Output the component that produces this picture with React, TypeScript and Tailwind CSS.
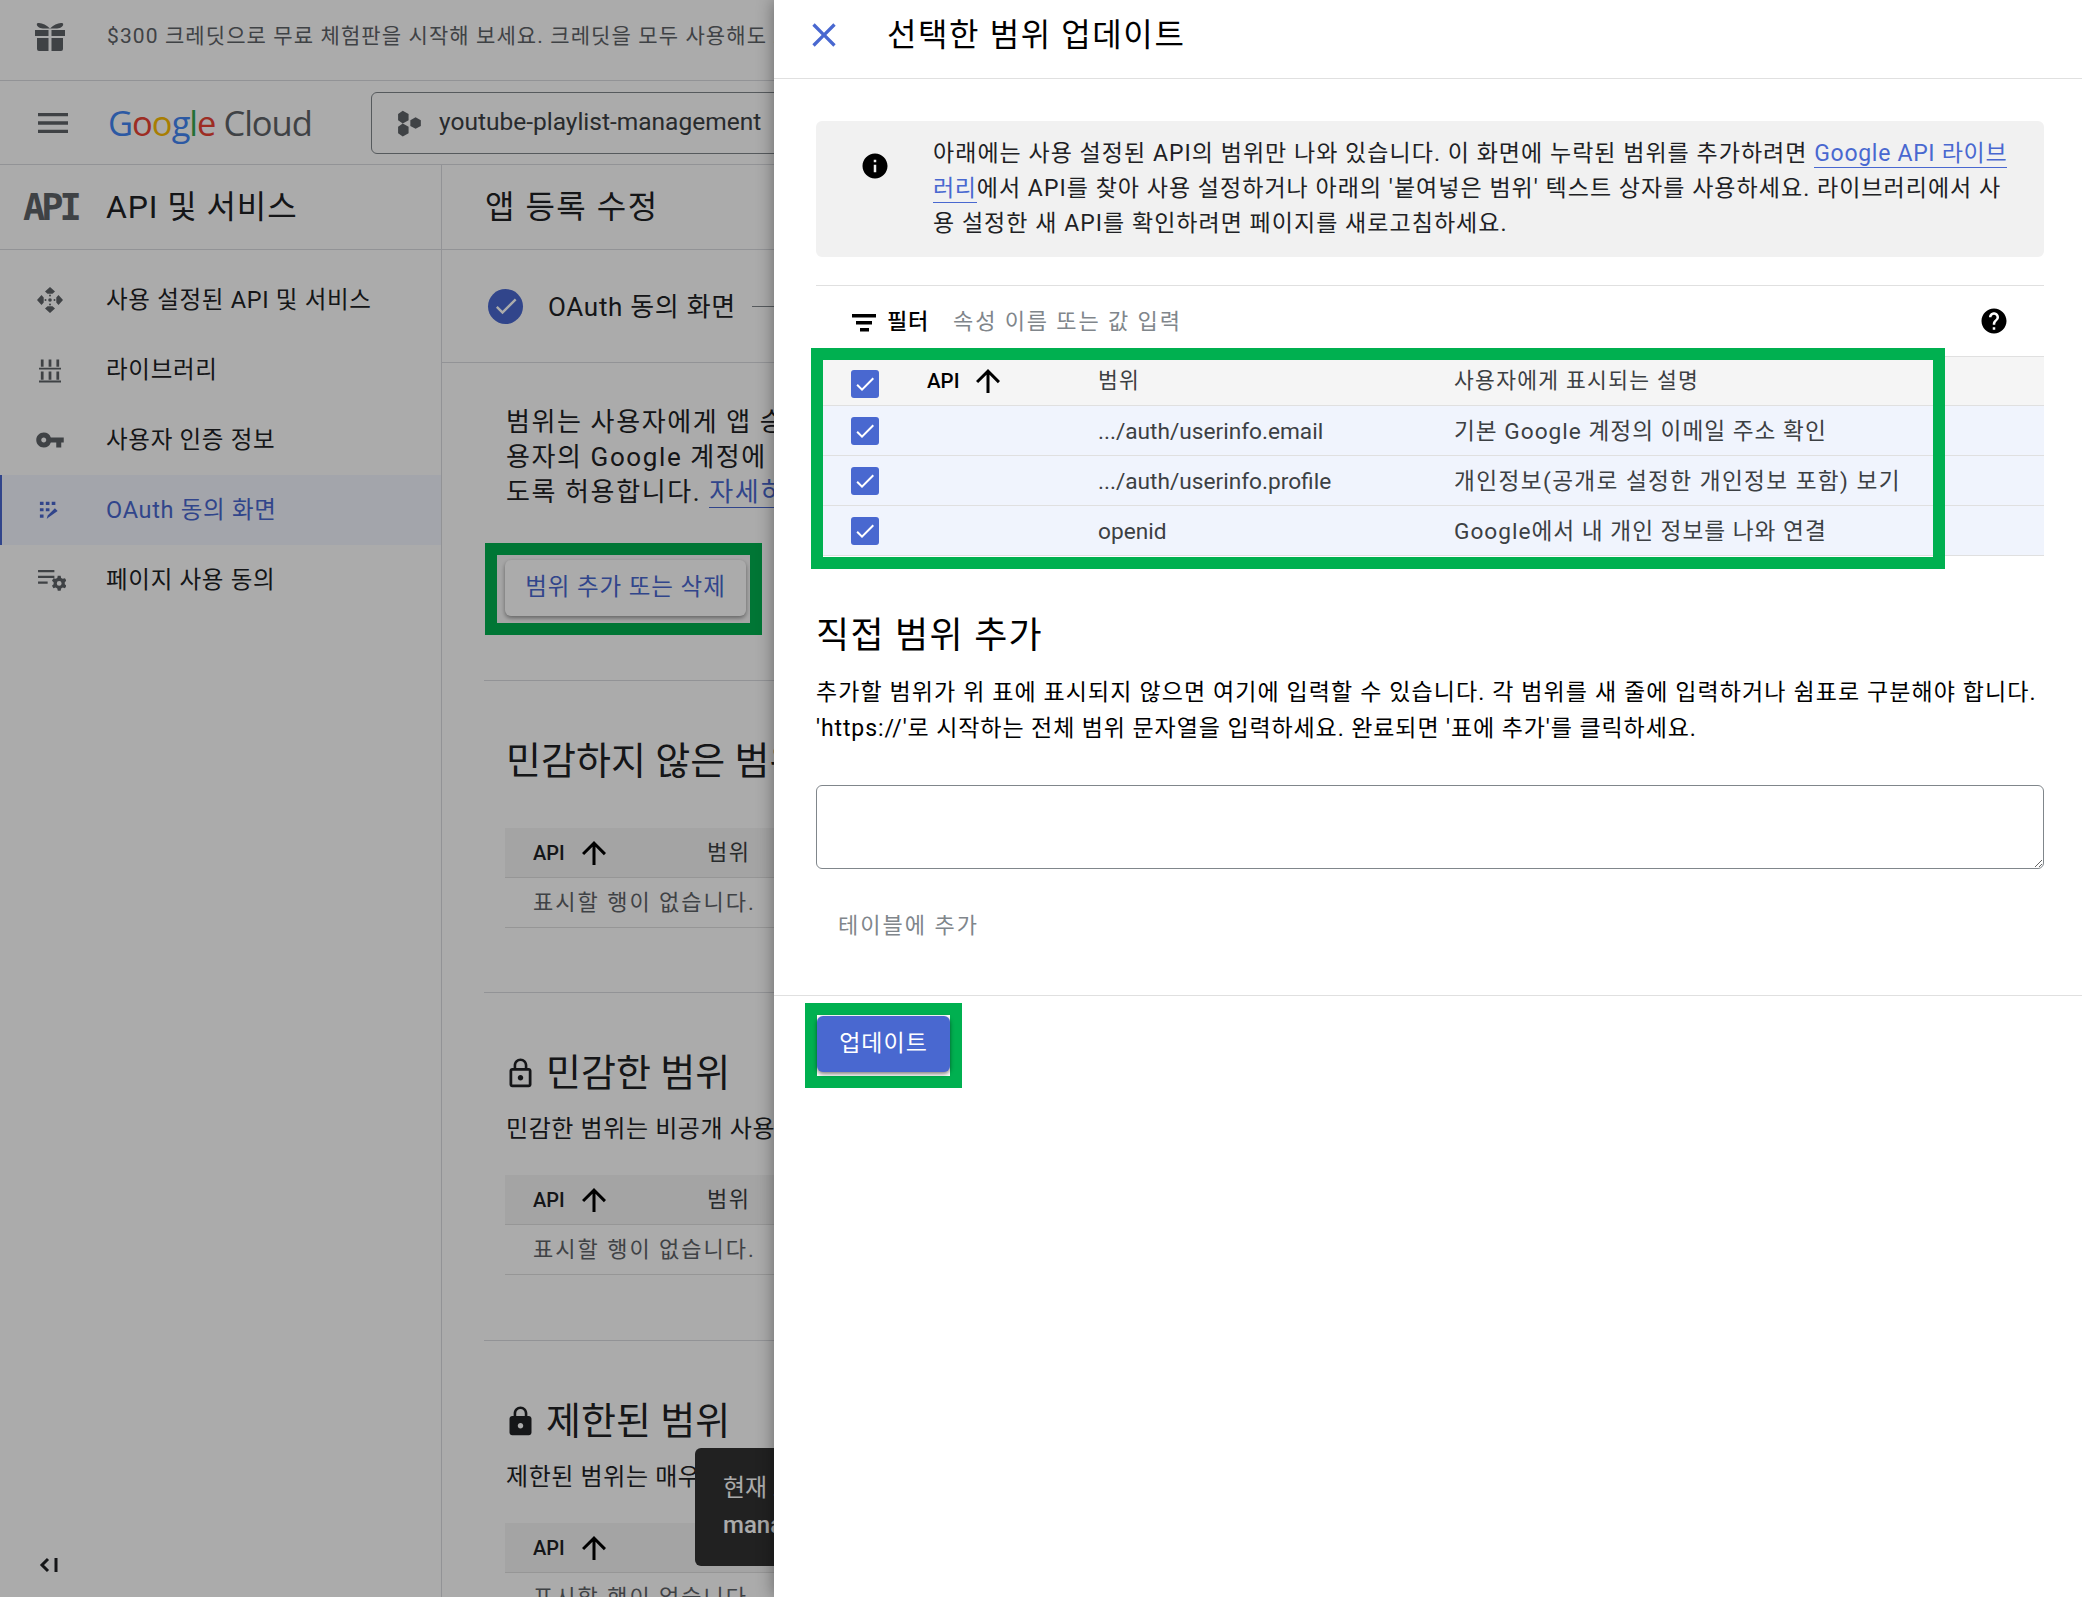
import React from 'react'
import {
  MdArrowUpward,
  MdCheck,
  MdClose,
  MdHelp,
  MdInfo,
  MdLock,
  MdLockOutline,
  MdMenu,
  MdVpnKey,
} from 'react-icons/md'

const GiftIcon = () => (
  <svg viewBox="0 0 32 32" className="w-8 h-8 text-[#5f6368]" fill="currentColor">
    <path d="M1 9h13.500v6H1zM17.500 9H31v6H17.500zM3 17h11.500v13H5a2 2 0 0 1-2-2zM17.500 17H29v11a2 2 0 0 1-2 2h-9.500z" />
    <path d="M3 2.500c3-1.500 9 1 13 5 4-4 10-6.500 13-5 1 2-2 5-6 5H9c-4 0-7-3-6-5z" />
  </svg>
)

const ProjectIcon = () => (
  <svg viewBox="0 0 24 24" className="w-7 h-7 text-[#5f6368]" fill="currentColor">
    <path d="M7.500 1.500l5 2.800v5.400l-5 2.800-4-2.800V4.300zM7.500 12.500l5 2.800v5.400l-5 2.800-4-2.800v-5.400zM18.500 7l4.500 2.600v5L18.500 17l-4.500-2.400v-5z" />
  </svg>
)

const ApisIcon = () => (
  <svg viewBox="0 0 28 28" className="w-7 h-7 ml-px text-[#5f6368]" fill="currentColor">
    <path d="M14 1l5 4.500-2.500 2.200h-5L9 5.500zM14 27l-5-4.500 2.500-2.200h5l2.500 2.200zM1 14l4.500-5 2.200 2.500v5L5.500 19zM27 14l-4.500 5-2.200-2.500v-5L22.500 9z" />
    <circle cx="14" cy="14" r="1.800" />
    <circle cx="14" cy="9.500" r="1" />
    <circle cx="14" cy="18.500" r="1" />
    <circle cx="9.500" cy="14" r="1" />
    <circle cx="18.500" cy="14" r="1" />
  </svg>
)

const LibraryIcon = () => (
  <svg viewBox="0 0 24 26" className="w-[22px] h-[25px] ml-1 text-[#5f6368]" fill="currentColor">
    <path d="M2 1h3v8H2zM10.500 1h3v8h-3zM19 1h3v8h-3zM0 10h24v2H0zM2 14h3v9H2zM10.500 14h3v9h-3zM19 14h3v9h-3zM0 24h24v2H0z" />
  </svg>
)

const OAuthIcon = () => (
  <svg viewBox="0 0 22 22" className="w-5 h-5 ml-1 text-[#4968d0]" fill="currentColor">
    <path d="M1 2h4v3.500H1zM7.500 2h4v3.500h-4zM14 2h4v3.500h-4zM1 9h4v3.500H1zM7.500 9h4v3.500h-4zM1 16h4v3.500H1z" />
    <path d="M10 19.500l-1.500 1.500 1-4 8-8 3 3z" />
  </svg>
)

const PageUsageIcon = () => (
  <svg viewBox="0 0 30 26" className="w-[29px] h-[25px] ml-[2px] text-[#5f6368]" fill="currentColor">
    <path d="M1 2h17v2.500H1zM1 8h17v2.500H1zM1 14h10v2.500H1z" />
    <path d="M21.500 8h3l.5 2.300 1.700 1 2.300-.7 1.500 2.600-1.700 1.600v2l1.700 1.600-1.500 2.600-2.300-.7-1.700 1-.5 2.300h-3l-.5-2.300-1.700-1-2.300.7-1.500-2.600 1.700-1.600v-2l-1.700-1.600 1.500-2.600 2.300.7 1.700-1zM23 13.500a2.500 2.500 0 1 0 0 5 2.500 2.500 0 0 0 0-5z" />
  </svg>
)

const FilterIcon = () => (
  <svg viewBox="0 0 24 18" className="w-6 h-[18px] mt-[3px] shrink-0 text-black" fill="currentColor">
    <path d="M0 0h24v3.600H0zM4 7h16v3.600H4zM8 14h9v3.600H8z" />
  </svg>
)

const navItems = [
  { label: '사용 설정된 API 및 서비스', icon: <ApisIcon /> },
  { label: '라이브러리', icon: <LibraryIcon /> },
  { label: '사용자 인증 정보', icon: <MdVpnKey className="w-[30px] h-[30px] text-[#5f6368]" /> },
  { label: 'OAuth 동의 화면', icon: <OAuthIcon />, active: true },
  { label: '페이지 사용 동의', icon: <PageUsageIcon /> },
]

const scopeRows = [
  { scope: '.../auth/userinfo.email', desc: '기본 Google 계정의 이메일 주소 확인', spacing: 'tracking-[1px]' },
  { scope: '.../auth/userinfo.profile', desc: '개인정보(공개로 설정한 개인정보 포함) 보기', spacing: 'tracking-[1.4px]' },
  { scope: 'openid', desc: 'Google에서 내 개인 정보를 나와 연결', spacing: 'tracking-[1px]' },
]

const Checkbox = () => (
  <div className="w-7 h-7 rounded-[3px] bg-[#4968d0] flex items-center justify-center">
    <MdCheck className="w-6 h-6 text-white" />
  </div>
)

const EmptyTable = () => (
  <div className="w-[300px] -ml-px">
    <div className="h-[50px] bg-[#f5f5f5] border-b border-[#e0e0e0] flex items-center pl-7">
      <span className="font-medium w-[34px] text-[20px] text-[#202124]">API</span>
      <MdArrowUpward className="w-9 h-9 text-black ml-[9px] shrink-0" />
      <span className="ml-[95px] text-[22px] tracking-[1.5px] text-[#3c4043] whitespace-nowrap">범위</span>
    </div>
    <div className="h-[50px] border-b border-[#e0e0e0] flex items-center pl-7 text-[22px] tracking-[2px] text-[#5f6368] whitespace-nowrap">
      표시할 행이 없습니다.
    </div>
  </div>
)

const App = () => {
  return (
    <div className="flex w-[2082px] h-[1597px] overflow-hidden bg-white text-[#202124] font-[Roboto,'Noto_Sans_CJK_KR',sans-serif]">
      {/* dimmed page behind the side panel */}
      <div className="relative w-[774px] h-full shrink-0 overflow-hidden">
        <div className="w-[1100px]">
          <div className="h-[81px] border-b border-[#dadce0] flex items-center pl-[34px] pb-[6px]">
            <GiftIcon />
            <span className="ml-[41px] text-[#5f6368] text-[21px] tracking-[1.1px] whitespace-nowrap">
              $300 크레딧으로 무료 체험판을 시작해 보세요. 크레딧을 모두 사용해도 요금이 청구되지 않습니다.
            </span>
          </div>
          <div className="h-[84px] border-b border-[#dadce0] flex items-center pl-[34px]">
            <MdMenu className="w-10 h-10 text-[#5f6368] -ml-px" />
            <div className="ml-[35px] w-[224px] text-[34.5px] tracking-[-1px] whitespace-nowrap font-['Open_Sans',sans-serif]">
              <span className="text-[#4285f4]">G</span>
              <span className="text-[#ea4335]">o</span>
              <span className="text-[#fbbc04]">o</span>
              <span className="text-[#4285f4]">g</span>
              <span className="text-[#34a853]">l</span>
              <span className="text-[#ea4335]">e</span>
              <span className="text-[#5f6368]"> Cloud</span>
            </div>
            <div className="ml-[39px] w-[600px] h-[62px] rounded-[6px] border border-[#80868b] flex items-center pl-[22px]">
              <ProjectIcon />
              <span className="ml-[17px] text-[24.5px] text-[#3c4043]">youtube-playlist-management</span>
            </div>
          </div>
        </div>

        <div className="flex h-[1432px]">
          <aside className="relative w-[442px] shrink-0 border-r border-[#dadce0]">
            <div className="h-[85px] border-b border-[#dadce0] flex items-center pl-[23px]">
              <span className="w-[83px] text-[37px] font-bold leading-none text-[#5f6368] font-['DejaVu_Sans_Mono',monospace] tracking-[-4px]">API</span>
              <span className="text-[32px] tracking-[0.9px] text-[#202124] whitespace-nowrap">API 및 서비스</span>
            </div>
            <nav className="pt-[15px]">
              {navItems.map((item) => (
                <div
                  key={item.label}
                  className={
                    item.active
                      ? 'h-[70px] flex items-center border-l-2 border-[#4968d0] bg-[#f4f6ff] text-[#4968d0]'
                      : 'h-[70px] flex items-center border-l-2 border-transparent text-[#202124]'
                  }
                >
                  <div className="w-[100px] pl-[33px] flex items-center">{item.icon}</div>
                  <span className="ml-1 pt-px text-[23.5px] tracking-[0.7px] whitespace-nowrap">{item.label}</span>
                </div>
              ))}
            </nav>
            <svg viewBox="0 0 20 16" className="absolute left-[39px] bottom-[24px] w-[20px] h-[16px] text-[#202124]" fill="none" stroke="currentColor" strokeWidth="3">
              <path d="M9 2L3 8l6 6M17 1v14" />
            </svg>
          </aside>

          <main className="relative flex-1">
            <div className="h-[85px] border-b border-[#dadce0] flex items-center pl-[43px]">
              <span className="text-[32px] tracking-[1.5px] whitespace-nowrap">앱 등록 수정</span>
            </div>
            <div className="h-[113px] border-b border-[#dadce0] flex items-center pl-[46px]">
              <div className="w-[35px] h-[35px] rounded-full bg-[#4968d0] flex items-center justify-center">
                <MdCheck className="w-7 h-7 text-white" />
              </div>
              <span className="ml-[25px] pt-[2px] text-[26px] tracking-[0.7px] whitespace-nowrap">OAuth 동의 화면</span>
              <div className="ml-4 w-10 h-px bg-[#80868b]" />
            </div>

            <div className="pl-[64px] pt-[42px] w-[800px]">
              <p className="text-[26px] tracking-[1.6px] leading-[35px] whitespace-nowrap">
                범위는 사용자에게 앱 승인을 요청할 때 표시되며 앱에서 사<br />
                용자의 Google 계정에 있는 특정 유형의 비공개 데이터에 액세스할 수 있<br />
                도록 허용합니다. <span className="text-[#4968d0] border-b border-[#4968d0]">자세히 알아보기</span>
              </p>
            </div>

            <div className="ml-[43px] mt-[33px] w-[277px] h-[92px] bg-[#00b050] p-3">
              <div className="w-full h-full bg-[#f7f7f7] pl-2 pt-[5px]">
                <div className="w-[241px] h-[56px] rounded-[6px] bg-white shadow-[0_2px_4px_rgba(0,0,0,0.4)] flex items-center justify-center text-[#4968d0] text-[23.5px] tracking-[0.9px] whitespace-nowrap">
                  범위 추가 또는 삭제
                </div>
              </div>
            </div>

            <div className="ml-[42px] mt-[45px] border-t border-[#dadce0] w-[500px] pl-[22px] pt-[50px] h-[312px]">
              <h2 className="text-[38px] leading-[60px] whitespace-nowrap">민감하지 않은 범위</h2>
              <div className="mt-[37px]"><EmptyTable /></div>
            </div>

            <div className="ml-[42px] border-t border-[#dadce0] w-[500px] pl-[22px] pt-[50px] h-[348px]">
              <h2 className="text-[38px] leading-[60px] flex items-center whitespace-nowrap">
                <MdLockOutline className="w-[33px] h-[33px] -ml-[2px] mr-[9px] text-[#202124]" />
                민감한 범위
              </h2>
              <p className="text-[24px] tracking-[0.6px] leading-[40px] mt-[6px] whitespace-nowrap">민감한 범위는 비공개 사용자 데이터를 요청합니다.</p>
              <div className="mt-[26px]"><EmptyTable /></div>
            </div>

            <div className="ml-[42px] border-t border-[#dadce0] w-[500px] pl-[22px] pt-[50px]">
              <h2 className="text-[38px] leading-[60px] flex items-center whitespace-nowrap">
                <MdLock className="w-[33px] h-[33px] -ml-[2px] mr-[9px] text-[#202124]" />
                제한된 범위
              </h2>
              <p className="text-[24px] tracking-[0.6px] leading-[40px] mt-[6px] whitespace-nowrap">제한된 범위는 매우 민감한 사용자 데이터를 요청합니다.</p>
              <div className="mt-[26px]"><EmptyTable /></div>
            </div>
          </main>
        </div>

        {/* snackbar */}
        <div className="absolute left-[695px] top-[1448px] w-[300px] h-[118px] rounded-[6px] bg-[#323232] text-white text-[24px] leading-[37px] pl-7 pt-[22px] whitespace-nowrap">
          <div>현재 프로젝트</div>
          <div className="font-medium">management</div>
        </div>

        <div className="absolute inset-0 bg-black/[0.33]" />
      </div>

      {/* side panel */}
      <div className="relative flex-1 h-full bg-white shadow-[0_0_16px_rgba(0,0,0,0.4)]">
        <div className="h-[79px] border-b border-[#e0e0e0] flex items-center pl-[30px] pb-2">
          <MdClose className="w-[40px] h-[40px] text-[#4968d0] shrink-0" />
          <h1 className="ml-[43px] text-[32px] tracking-[1.6px] text-black whitespace-nowrap">선택한 범위 업데이트</h1>
        </div>

        <div className="pl-[42px] pr-[38px] pt-[42px]">
          <div className="h-[136px] rounded-[6px] bg-[#f1f1f1] flex pl-[44px]">
            <MdInfo className="w-[30px] h-[30px] text-black mt-[30px] shrink-0" />
            <p className="ml-[43px] pt-[15px] text-[23px] tracking-[1.03px] leading-[35px] text-[#202124] whitespace-nowrap">
              아래에는 사용 설정된 API의 범위만 나와 있습니다. 이 화면에 누락된 범위를 추가하려면{' '}
              <span className="text-[#4968d0] border-b border-[#4968d0] tracking-[0.7px]">Google API 라이브<br />러리</span>
              에서 API를 찾아 사용 설정하거나 아래의 '붙여넣은 범위' 텍스트 상자를 사용하세요. 라이브러리에서 사<br />
              용 설정한 새 API를 확인하려면 페이지를 새로고침하세요.
            </p>
          </div>

          <div className="mt-[28px] h-[71px] border-t border-[#e0e0e0] flex items-center pl-[36px] pr-[35px]">
            <FilterIcon />
            <span className="ml-[11px] text-[22px] tracking-[0.8px] font-medium text-black">필터</span>
            <span className="ml-[24px] text-[22px] tracking-[1.9px] text-[#80868b]">속성 이름 또는 값 입력</span>
            <MdHelp className="ml-auto w-[30px] h-[30px] text-black" />
          </div>

          {/* scope table */}
          <div className="relative">
            <div className="h-[50px] bg-[#f5f5f5] border-y border-[#e0e0e0] flex items-center">
              <div className="w-[111px] pl-[35px] pt-[6px]"><Checkbox /></div>
              <div className="w-[171px] flex items-center">
                <span className="font-medium text-[20.5px] text-black">API</span>
                <MdArrowUpward className="ml-[11px] w-9 h-9 text-black" />
              </div>
              <div className="w-[356px] pt-px text-[21.5px] tracking-[1.2px] text-[#3c4043]">범위</div>
              <div className="pt-px text-[21.5px] tracking-[1.3px] text-[#3c4043] whitespace-nowrap">사용자에게 표시되는 설명</div>
            </div>
            {scopeRows.map((row) => (
              <div key={row.scope} className="h-[50px] bg-[#f0f4fd] border-b border-[#e0e0e0] flex items-center">
                <div className="w-[111px] pl-[35px]"><Checkbox /></div>
                <div className="w-[171px]" />
                <div className="w-[356px] pt-[2px] text-[22.67px] text-[#3c4043]">{row.scope}</div>
                <div className={`pt-[2px] text-[22.67px] text-[#3c4043] whitespace-nowrap ${row.spacing}`}>{row.desc}</div>
              </div>
            ))}
            {/* green annotation frame */}
            <div className="absolute left-[-5px] top-[-8px] w-[1134px] h-[221px] border-[12px] border-[#00b050]" />
          </div>

          <h2 className="mt-[53px] text-[36px] tracking-[1.3px] leading-[54px] text-black">직접 범위 추가</h2>
          <p className="mt-[12px] text-[23px] tracking-[1.1px] leading-[36px] text-black whitespace-nowrap">
            추가할 범위가 위 표에 표시되지 않으면 여기에 입력할 수 있습니다. 각 범위를 새 줄에 입력하거나 쉼표로 구분해야 합니다.<br />
            <span className="tracking-[0.9px]">'https://'로 시작하는 전체 범위 문자열을 입력하세요. 완료되면 '표에 추가'를 클릭하세요.</span>
          </p>
          <textarea className="block mt-[38px] w-full h-[84px] rounded-[6px] border border-[#80868b] bg-white" />
          <div className="mt-[41px] pl-[22px] text-[22px] tracking-[2px] leading-[32px] text-[#80868b]">테이블에 추가</div>
        </div>

        <div className="mt-[53px] border-t border-[#e0e0e0] pl-[31px] pt-[7px]">
          <div className="w-[157px] h-[85px] bg-[#00b050] p-3">
            <div className="w-full h-full bg-white pt-px">
              <div className="w-full h-[56px] rounded-[6px] bg-[#4968d0] shadow-[0_2px_4px_rgba(0,0,0,0.5)] flex items-center justify-center text-white text-[23px] tracking-[1px]">
                업데이트
              </div>
            </div>
          </div>
        </div>
      </div>
    </div>
  )
}

export default App
